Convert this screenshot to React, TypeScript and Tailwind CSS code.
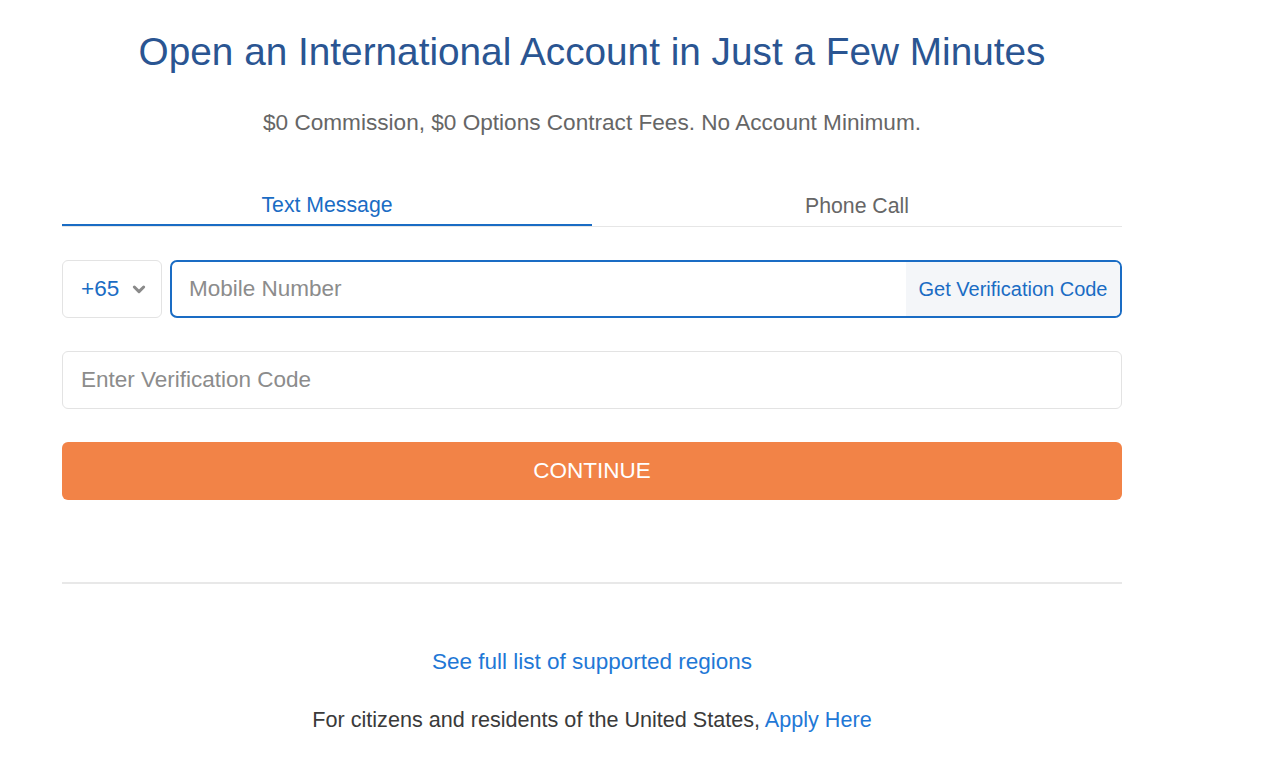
import React from "react";

export default function App() {
  return (
    <div className="min-h-screen bg-white" style={{ fontFamily: '"Liberation Sans", Arial, sans-serif' }}>
      <div className="ml-[62px] w-[1060px] pt-[29px]">
        <h1 className="text-center text-[38.75px] leading-[46px] text-[#2a5592]">
          Open an International Account in Just a Few Minutes
        </h1>
        <p className="mt-[34px] text-center text-[22.6px] leading-[27px] text-[#666666]">
          $0 Commission, $0 Options Contract Fees. No Account Minimum.
        </p>

        <div className="mt-[48px] flex border-b border-[#e6e6e6]">
          <div className="-mb-px flex h-[42px] flex-1 items-center justify-center border-b-2 border-[#1a6cc4] pt-[4px] text-[21.25px] text-[#1a6cc4]">
            Text Message
          </div>
          <div className="flex h-[42px] flex-1 items-center justify-center pt-[4px] text-[21.25px] text-[#666666]">
            Phone Call
          </div>
        </div>

        <div className="mt-[33px] flex h-[58px] gap-[8px]">
          <div className="flex w-[100px] items-center justify-between rounded-[6px] border border-[#e3e3e3] pl-[18px] pr-[14px]">
            <span className="text-[22.5px] text-[#1a6cc4]">+65</span>
            <svg width="16" height="16" viewBox="0 0 24 24" fill="none" stroke="#8a8a8a" strokeWidth="4.5" strokeLinecap="round" strokeLinejoin="round">
              <path d="M5 9l7 7 7-7" />
            </svg>
          </div>
          <div className="flex flex-1 overflow-hidden rounded-[7px] border-2 border-[#1a6cc4]">
            <div className="flex flex-1 items-center pl-[17px] text-[22.5px] text-[#8c8c8c]">Mobile Number</div>
            <div className="flex w-[214px] items-center justify-center bg-[#f4f6f9] text-[20px] text-[#1a6cc4]">
              Get Verification Code
            </div>
          </div>
        </div>

        <div className="mt-[33px] flex h-[58px] items-center rounded-[6px] border border-[#e3e3e3] pl-[18px] text-[22.5px] text-[#8c8c8c]">
          Enter Verification Code
        </div>

        <div className="mt-[33px] flex h-[58px] items-center justify-center rounded-[6px] bg-[#f28347] text-[22.5px] text-white">
          CONTINUE
        </div>

        <div className="mt-[82px] h-[2px] bg-[#e8e8e8]" />

        <p className="mt-[64px] text-center text-[22.5px] leading-[27px] text-[#1f78d6]">
          See full list of supported regions
        </p>
        <p className="mt-[31px] text-center text-[21.6px] leading-[27px] text-[#3a3a3a]">
          For citizens and residents of the United States, <span className="text-[#1f78d6]">Apply Here</span>
        </p>
      </div>
    </div>
  );
}
